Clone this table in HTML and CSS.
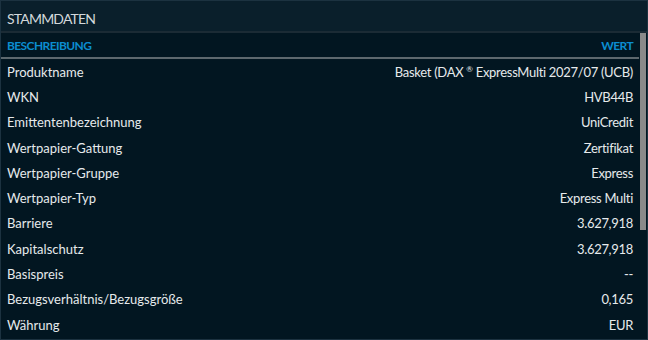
FILE: index.html
```html
<!DOCTYPE html>
<html lang="de">
<head>
<meta charset="utf-8">
<link rel="stylesheet" href="styles.css">
</head>
<body>
<section class="panel">
  <header class="title">STAMMDATEN</header>
  <div class="content">
    <div class="table">
      <div class="row head"><span>Beschreibung</span><span>Wert</span></div>
      <div class="row"><span>Produktname</span><span class="val">Basket (DAX<sup>®</sup> ExpressMulti 2027/07 (UCB)</span></div>
      <div class="row"><span>WKN</span><span class="val">HVB44B</span></div>
      <div class="row"><span>Emittentenbezeichnung</span><span class="val">UniCredit</span></div>
      <div class="row"><span>Wertpapier-Gattung</span><span class="val">Zertifikat</span></div>
      <div class="row"><span>Wertpapier-Gruppe</span><span class="val">Express</span></div>
      <div class="row"><span>Wertpapier-Typ</span><span class="val">Express Multi</span></div>
      <div class="row"><span>Barriere</span><span class="val">3.627,918</span></div>
      <div class="row"><span>Kapitalschutz</span><span class="val">3.627,918</span></div>
      <div class="row"><span>Basispreis</span><span class="val">--</span></div>
      <div class="row"><span>Bezugsverhältnis/Bezugsgröße</span><span class="val">0,165</span></div>
      <div class="row"><span>Währung</span><span class="val">EUR</span></div>
    </div>
    <div class="scroll"><div class="thumb"></div></div>
  </div>
</section>
</body>
</html>
```
FILE: styles.css
```css
html, body {
  margin: 0;
  padding: 0;
  background: #021621;
}
.panel {
  width: 648px;
  height: 340px;
  box-sizing: border-box;
  border: 1px solid #1c3240;
  background: #021621;
  font-family: Lato, "Liberation Sans", sans-serif;
  color: #e6eaec;
  overflow: hidden;
}
.title {
  height: 30px;
  line-height: 35px;
  padding-left: 6px;
  font-size: 14px;
  letter-spacing: -0.8px;
  color: #d3d8db;
  background: #0a1f2b;
  border-bottom: 2px solid #1b2b35;
}
.content {
  display: flex;
}
.table {
  flex: 1;
}
.row {
  display: flex;
  justify-content: space-between;
  align-items: center;
  height: 25.3px;
  padding: 0 6px 0 6px;
  font-size: 13px;
}
.val {
  letter-spacing: -0.3px;
}
.row.head {
  height: 23px;
  border-bottom: 2px solid #5d686e;
  text-transform: uppercase;
  font-weight: bold;
  font-size: 12px;
  letter-spacing: -0.6px;
  color: #0b8dd0;
  padding-top: 1px;
}
sup {
  font-size: 8px;
  vertical-align: 5px;
  margin-left: 3px;
}
.scroll {
  width: 6px;
  margin-left: 1px;
  padding-right: 1px;
}
.thumb {
  width: 6px;
  height: 197px;
  background: #8a8a8a;
}
```
